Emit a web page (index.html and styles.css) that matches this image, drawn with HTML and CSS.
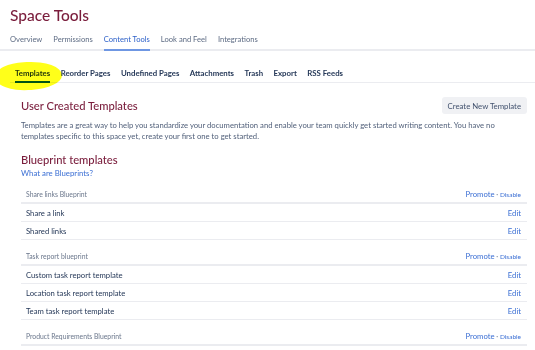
FILE: index.html
```html
<!DOCTYPE html>
<html lang="en">
<head>
    <meta charset="UTF-8">
    <meta name="viewport" content="width=device-width, initial-scale=1.0">
    <title>Space Tools</title>
    <link rel="stylesheet" href="styles.css">
</head>
<body>
    <div class="page-header">
        <h1>Space Tools</h1>
        <nav class="main-tabs">
            <a href="#">Overview</a>
            <a href="#">Permissions</a>
            <a href="#" class="active">Content Tools</a>
            <a href="#">Look and Feel</a>
            <a href="#">Integrations</a>
        </nav>
    </div>

    <nav class="sub-tabs">
        <a href="#" class="active">Templates</a>
        <a href="#">Reorder Pages</a>
        <a href="#">Undefined Pages</a>
        <a href="#">Attachments</a>
        <a href="#">Trash</a>
        <a href="#">Export</a>
        <a href="#">RSS Feeds</a>
        <!-- highlighter mark over the first tab -->
        <span class="highlight"></span>
    </nav>

    <div class="content">
        <div class="section-head">
            <h2>User Created Templates</h2>
            <button>Create New Template</button>
        </div>
        <p class="intro">Templates are a great way to help you standardize your documentation and enable your team quickly get started writing content. You have no templates specific to this space yet, create your first one to get started.</p>

        <h2 class="blueprint-title">Blueprint templates</h2>
        <a href="#" class="help-link">What are Blueprints?</a>

        <div class="blueprints">
            <div class="group-row">
                <span>Share links Blueprint</span>
                <span class="actions"><a href="#">Promote</a> · <a href="#" class="small">Disable</a></span>
            </div>
            <div class="row"><span>Share a link</span><a href="#">Edit</a></div>
            <div class="row"><span>Shared links</span><a href="#">Edit</a></div>

            <div class="group-row">
                <span>Task report blueprint</span>
                <span class="actions"><a href="#">Promote</a> · <a href="#" class="small">Disable</a></span>
            </div>
            <div class="row"><span>Custom task report template</span><a href="#">Edit</a></div>
            <div class="row"><span>Location task report template</span><a href="#">Edit</a></div>
            <div class="row"><span>Team task report template</span><a href="#">Edit</a></div>

            <div class="group-row">
                <span>Product Requirements Blueprint</span>
                <span class="actions"><a href="#">Promote</a> · <a href="#" class="small">Disable</a></span>
            </div>
        </div>
    </div>
</body>
</html>
```

FILE: styles.css
```css
body {
    margin: 0;
    font-family: Lato, "Open Sans", sans-serif;
    color: #42526e;
    background: #fff;
}

a {
    text-decoration: none;
    color: #3b6fd4;
}

.page-header {
    border-bottom: 2px solid #ebecf0;
}

h1 {
    margin: 0;
    padding: 4px 0 0 10px;
    font-size: 15.5px;
    font-weight: 500;
    line-height: 22px;
    color: #7a1d3c;
}

.main-tabs {
    display: flex;
    gap: 11px;
    padding: 7px 0 0 10px;
}

.main-tabs a {
    font-size: 7.6px;
    line-height: 12px;
    padding-bottom: 4px;
    color: #5e6c84;
    border-bottom: 2px solid transparent;
    margin-bottom: -2px;
}

.main-tabs a.active {
    color: #2f62c9;
    border-bottom-color: #6f97e3;
}

.sub-tabs {
    position: relative;
    display: flex;
    gap: 10.5px;
    margin: 16px 0 0 10px;
    padding-left: 5px;
    border-bottom: 1px solid #ebecf0;
}

.sub-tabs a {
    font-size: 7.8px;
    line-height: 12px;
    padding-bottom: 2px;
    color: #253858;
    font-weight: 700;
    border-bottom: 2px solid transparent;
    margin-bottom: -1px;
}

.sub-tabs a.active {
    border-bottom-color: #0052cc;
}

.highlight {
    position: absolute;
    left: -14px;
    top: -5px;
    width: 66px;
    height: 28px;
    background: #ffff1a;
    border-radius: 45% 55% 50% 50%;
    mix-blend-mode: multiply;
    transform: rotate(-3deg);
}

.content {
    padding: 0 8px 0 21px;
}

.section-head {
    display: flex;
    justify-content: space-between;
    align-items: center;
    margin-top: 14px;
}

h2 {
    margin: 0;
    font-size: 11.2px;
    font-weight: 500;
    color: #7a1d3c;
}

.section-head button {
    font-family: inherit;
    font-size: 7.8px;
    color: #42526e;
    background: #f0f1f4;
    border: none;
    border-radius: 3px;
    padding: 3px 6px;
    height: 17px;
}

.intro {
    margin: 6px 0 0;
    font-size: 7.7px;
    line-height: 11px;
    color: #505f79;
}

.blueprint-title {
    margin-top: 10px;
    line-height: 16px;
}

.help-link {
    display: block;
    font-size: 7.8px;
    line-height: 10px;
}

.row,
.group-row {
    box-sizing: border-box;
    display: flex;
    justify-content: space-between;
    align-items: center;
    padding: 0 6px 0 5px;
    border-bottom: 1px solid #ebecf0;
}

.row {
    height: 18px;
    font-size: 7.7px;
    color: #253858;
}

.group-row {
    height: 26px;
    padding-top: 7px;
    font-size: 6.8px;
    color: #6b778c;
    border-bottom-width: 2px;
}

.row a,
.actions a {
    font-size: 7.7px;
}

.actions {
    font-size: 7px;
    color: #6b778c;
}

.actions a.small {
    font-size: 6.5px;
}
```
